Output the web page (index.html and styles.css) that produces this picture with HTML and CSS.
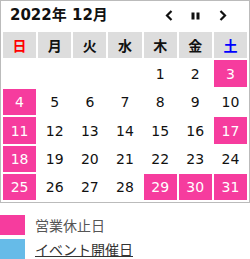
FILE: index.html
```html
<!DOCTYPE html>
<html lang="ja">
<head>
<meta charset="utf-8">
<link rel="stylesheet" href="styles.css">
</head>
<body>
<div class="cal">
  <div class="cal-head">
    <div class="cal-title">2022年 12月</div>
    <div class="cal-nav">
      <span class="nav-btn"><svg width="8" height="11" viewBox="0 0 8 11"><path d="M6.5 1 L2 5.5 L6.5 10" fill="none" stroke="#111" stroke-width="2.2"/></svg></span>
      <span class="nav-btn"><svg width="9" height="8" viewBox="0 0 9 8"><rect x="0.5" y="0.5" width="3" height="7" fill="#111"/><rect x="5.5" y="0.5" width="3" height="7" fill="#111"/></svg></span>
      <span class="nav-btn"><svg width="8" height="11" viewBox="0 0 8 11"><path d="M1.5 1 L6 5.5 L1.5 10" fill="none" stroke="#111" stroke-width="2.2"/></svg></span>
    </div>
  </div>
  <div class="grid">
    <div class="wd sun">日</div><div class="wd">月</div><div class="wd">火</div><div class="wd">水</div><div class="wd">木</div><div class="wd">金</div><div class="wd sat">土</div>
    <div class="d"></div><div class="d"></div><div class="d"></div><div class="d"></div><div class="d">1</div><div class="d">2</div><div class="d off">3</div>
    <div class="d off">4</div><div class="d">5</div><div class="d">6</div><div class="d">7</div><div class="d">8</div><div class="d">9</div><div class="d">10</div>
    <div class="d off">11</div><div class="d">12</div><div class="d">13</div><div class="d">14</div><div class="d">15</div><div class="d">16</div><div class="d off">17</div>
    <div class="d off">18</div><div class="d">19</div><div class="d">20</div><div class="d">21</div><div class="d">22</div><div class="d">23</div><div class="d">24</div>
    <div class="d off">25</div><div class="d">26</div><div class="d">27</div><div class="d">28</div><div class="d off">29</div><div class="d off">30</div><div class="d off">31</div>
  </div>
</div>
<ul class="legend">
  <li class="legend-item"><span class="swatch pink"></span><span class="legend-text">営業休止日</span></li>
  <li class="legend-item"><span class="swatch blue"></span><a class="legend-link">イベント開催日</a></li>
</ul>
</body>
</html>
```

FILE: styles.css
```css
html, body {
  margin: 0;
  padding: 0;
  background: #fff;
}
body {
  font-family: "DejaVu Sans", "Noto Sans CJK JP", sans-serif;
  font-size: 14px;
  color: #111;
}
.cal {
  border: 1px solid #bbb;
  width: 248px;
}
.cal-head {
  display: flex;
  align-items: center;
  justify-content: space-between;
  height: 29px;
  padding: 0 13px 0 9px;
}
.cal-title {
  font-weight: bold;
  font-size: 15px;
  line-height: 29px;
}
.cal-nav {
  display: flex;
}
.nav-btn {
  width: 27px;
  height: 29px;
  display: flex;
  align-items: center;
  justify-content: center;
}
.grid {
  display: grid;
  grid-template-columns: repeat(7, 1fr);
  grid-template-rows: 26px 27px 26px 27px 26px 26px;
  gap: 2px;
  padding: 2px;
}
.wd {
  background: #ddd;
  font-weight: bold;
  display: flex;
  align-items: center;
  justify-content: center;
  color: #111;
}
.wd.sun { color: #f00; }
.wd.sat { color: #00f; }
.d {
  display: flex;
  align-items: center;
  justify-content: center;
  color: #111;
}
.d.off {
  background: #f63c9e;
  color: #fff;
}
.legend {
  list-style: none;
  margin: 12px 0 0;
  padding: 0;
  display: flex;
  flex-direction: column;
  gap: 4px;
}
.legend-item {
  display: flex;
  align-items: center;
  height: 20px;
}
.swatch {
  width: 25px;
  height: 20px;
  margin-right: 10px;
}
.swatch.pink { background: #f63c9e; }
.swatch.blue { background: #66bbe8; }
.legend-text { color: #555; }
.legend-link {
  color: #333;
  text-decoration: underline;
}
```
